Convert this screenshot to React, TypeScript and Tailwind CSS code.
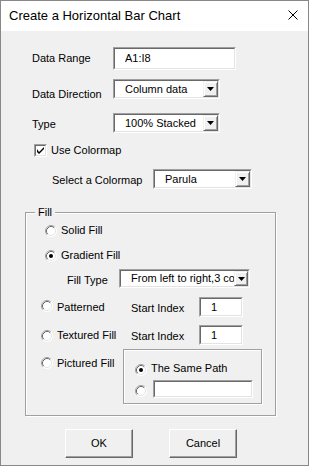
import React from "react";

const Sunken = ({ className, children }: { className: string; children?: React.ReactNode }) => (
  <div className={`border border-t-[#a0a0a0] border-l-[#a0a0a0] border-b-white border-r-white ${className}`}>
    <div className="h-full w-full border border-t-[#696969] border-l-[#696969] border-b-[#e3e3e3] border-r-[#e3e3e3] bg-white flex items-center overflow-hidden">
      {children}
    </div>
  </div>
);

const DropBtn = ({ w }: { w: string }) => (
  <div className={`h-full ${w} shrink-0 bg-[#f0f0f0] border border-t-[#f0f0f0] border-l-[#f0f0f0] border-b-[#696969] border-r-[#696969] shadow-[inset_1px_1px_0_#ffffff,inset_-1px_-1px_0_#a0a0a0] flex items-center justify-center`}>
    <svg width="7" height="4" viewBox="0 0 7 4">
      <polygon points="0,0 7,0 3.5,4" fill="#000" />
    </svg>
  </div>
);

const Combo = ({ className, text, btn = "w-[15px]" }: { className: string; text: string; btn?: string }) => (
  <Sunken className={className}>
    <div className="flex-1 min-w-0 overflow-hidden whitespace-nowrap pl-[10px]">{text}</div>
    <DropBtn w={btn} />
  </Sunken>
);

const Radio = ({ checked, className }: { checked?: boolean; className: string }) => (
  <svg width="12" height="12" viewBox="0 0 12 12" className={`shrink-0 ${className}`}>
    <circle cx="6" cy="6" r="5.5" fill="#fff" />
    <path d="M2.11 9.89 A5.5 5.5 0 0 1 9.89 2.11" stroke="#a0a0a0" fill="none" strokeWidth="1" />
    <path d="M2.82 9.18 A4.5 4.5 0 0 1 9.18 2.82" stroke="#696969" fill="none" strokeWidth="1" />
    <path d="M9.89 2.11 A5.5 5.5 0 0 1 2.11 9.89" stroke="#ffffff" fill="none" strokeWidth="1" />
    <path d="M9.18 2.82 A4.5 4.5 0 0 1 2.82 9.18" stroke="#e3e3e3" fill="none" strokeWidth="1" />
    {checked && <circle cx="6" cy="6" r="2" fill="#000" />}
  </svg>
);

export default function App() {
  return (
    <div className="w-[309px] h-[466px] border border-[#888888] flex flex-col text-black text-[11px] leading-[13px] font-['Liberation_Sans',Arial,sans-serif]">
      {/* Title bar */}
      <div className="h-[30px] bg-white flex items-start justify-between pl-[8px] pr-[10px] pt-[7px] shrink-0">
        <span className="text-[13px] leading-[15px]">Create a Horizontal Bar Chart</span>
        <svg width="10" height="10" viewBox="0 0 10 10" className="mt-[2px]">
          <path d="M0.5 0.5 L9.5 9.5 M9.5 0.5 L0.5 9.5" stroke="#000" strokeWidth="1" />
        </svg>
      </div>

      {/* Body */}
      <div className="flex-1 bg-[#f0f0f0] flex flex-col">
        {/* Data Range */}
        <div className="flex mt-[16px]">
          <div className="ml-[31px] w-[81px] mt-[5px]">Data Range</div>
          <Sunken className="w-[123px] h-[23px]">
            <span className="pl-[10px]">A1:I8</span>
          </Sunken>
        </div>

        {/* Data Direction */}
        <div className="flex mt-[9px]">
          <div className="ml-[31px] w-[81px] mt-[9px]">Data Direction</div>
          <Combo className="w-[107px] h-[20px]" text="Column data" />
        </div>

        {/* Type */}
        <div className="flex mt-[12px]">
          <div className="ml-[31px] w-[81px] mt-[5px]">Type</div>
          <Combo className="w-[107px] h-[20px]" text="100% Stacked" />
        </div>

        {/* Use Colormap */}
        <div className="flex mt-[11px] h-[13px]">
          <div className="ml-[33px] w-[13px] h-[13px] border border-t-[#a0a0a0] border-l-[#a0a0a0] border-b-white border-r-white">
            <div className="w-full h-full bg-white border border-t-[#696969] border-l-[#696969] border-b-[#e3e3e3] border-r-[#e3e3e3] flex items-center justify-center">
              <svg width="7" height="7" viewBox="0 0 7 7">
                <path d="M0 2 L0 5 L2 7 L7 2 L7 0 L2 5 Z" fill="#000" />
              </svg>
            </div>
          </div>
          <div className="ml-[4px]">Use Colormap</div>
        </div>

        {/* Select a Colormap */}
        <div className="flex mt-[12px]">
          <div className="ml-[51px] w-[101px] mt-[5px]">Select a Colormap</div>
          <Combo className="w-[99px] h-[20px]" text="Parula" />
        </div>

        {/* Fill frame */}
        <div className="relative mt-[23px] ml-[24px] w-[251px] h-[204px] border border-[#a0a0a0] shadow-[inset_1px_1px_0_#ffffff,1px_1px_0_#ffffff] flex flex-col">
          <span className="absolute top-[-7px] left-[9px] px-[3px] bg-[#f0f0f0]">Fill</span>

          <div className="flex mt-[11px] h-[13px]">
            <Radio className="ml-[19px] mt-[1px]" />
            <div className="ml-[4px]">Solid Fill</div>
          </div>

          <div className="flex mt-[12px] h-[13px]">
            <Radio checked className="ml-[19px] mt-[1px]" />
            <div className="ml-[4px]">Gradient Fill</div>
          </div>

          <div className="flex mt-[7px]">
            <div className="ml-[41px] w-[52px] mt-[5px]">Fill Type</div>
            <Combo className="w-[131px] h-[19px]" text="From left to right,3 colors" btn="w-[14px]" />
          </div>

          <div className="flex mt-[9px]">
            <Radio className="ml-[15px] mt-[3px]" />
            <div className="ml-[4px] w-[74px] mt-[4px]">Patterned</div>
            <div className="w-[68px] mt-[5px]">Start Index</div>
            <Sunken className="w-[44px] h-[20px]">
              <span className="pl-[10px]">1</span>
            </Sunken>
          </div>

          <div className="flex mt-[8px]">
            <Radio className="ml-[15px] mt-[5px]" />
            <div className="ml-[4px] w-[74px] mt-[4px]">Textured Fill</div>
            <div className="w-[68px] mt-[5px]">Start Index</div>
            <Sunken className="w-[44px] h-[20px]">
              <span className="pl-[10px]">1</span>
            </Sunken>
          </div>

          <div className="flex mt-[4px]">
            <Radio className="ml-[15px] mt-[8px]" />
            <div className="ml-[4px] w-[66px] mt-[8px]">Pictured Fill</div>
            <div className="w-[139px] h-[55px] border border-[#a0a0a0] shadow-[inset_1px_1px_0_#ffffff,1px_1px_0_#ffffff] flex flex-col">
              <div className="flex mt-[12px] h-[13px]">
                <Radio checked className="ml-[11px] mt-[2px]" />
                <div className="ml-[4px]">The Same Path</div>
              </div>
              <div className="flex mt-[5px]">
                <Radio className="ml-[11px] mt-[5px]" />
                <Sunken className="ml-[6px] w-[100px] h-[18px]" />
              </div>
            </div>
          </div>
        </div>

        {/* Buttons */}
        <div className="flex mt-[13px]">
          <div className="ml-[64px] w-[68px] h-[29px] bg-[#f0f0f0] border border-t-white border-l-white border-b-[#696969] border-r-[#696969] shadow-[inset_-1px_-1px_0_#a0a0a0] flex items-center justify-center">
            OK
          </div>
          <div className="ml-[36px] w-[68px] h-[29px] bg-[#f0f0f0] border border-t-white border-l-white border-b-[#696969] border-r-[#696969] shadow-[inset_-1px_-1px_0_#a0a0a0] flex items-center justify-center">
            Cancel
          </div>
        </div>
      </div>
    </div>
  );
}
